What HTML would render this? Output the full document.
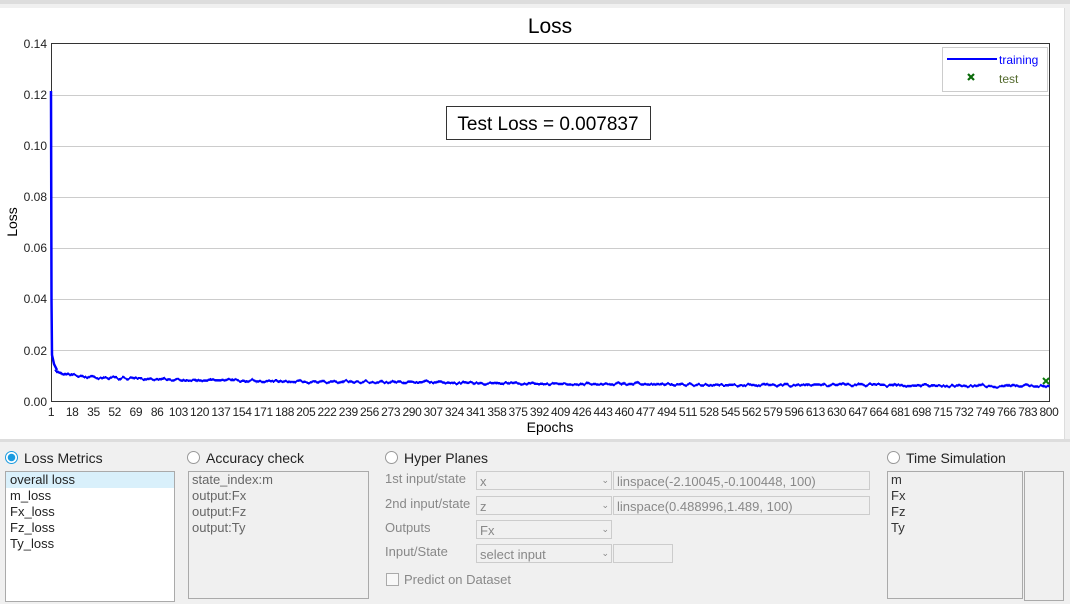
<!DOCTYPE html>
<html><head><meta charset="utf-8"><style>
body{margin:0;width:1070px;height:604px;background:#f0f0f0;font-family:"Liberation Sans",Arial,sans-serif;position:relative;overflow:hidden}
.abs{position:absolute}
.radio{position:absolute;width:11px;height:11px;border:1px solid #999;border-radius:50%;background:#fff}
.lbl{position:absolute;font-size:14px;color:#222}
.box{position:absolute;border:1px solid #aaa}
.g{color:#888;font-size:13px;position:absolute}
.dd{position:absolute;border:1px solid #ccc;background:#f0f0f0;font-size:13px;color:#888;box-sizing:border-box;padding:2px 3px}
</style></head><body>
<div class="abs" style="left:0;top:0;width:1070px;height:4px;background:#ddd"></div>
<div class="abs" style="left:0;top:8px;width:1064px;height:431px;background:#fff;border-right:1px solid #ddd"></div>
<div class="abs" style="left:0;top:439px;width:1070px;height:3px;background:#ddd"></div>
<svg class="abs" style="left:0;top:0" width="1070" height="440" font-family="Liberation Sans, Arial, sans-serif">
<defs>
<filter id="jit" x="-1%" y="-50%" width="102%" height="200%">
<feTurbulence type="fractalNoise" baseFrequency="0.25 0.02" numOctaves="2" seed="3" result="n"/>
<feDisplacementMap in="SourceGraphic" in2="n" scale="5" xChannelSelector="R" yChannelSelector="G"/>
</filter>
</defs>
<text x="550" y="33" font-size="21" text-anchor="middle" fill="#000">Loss</text>
<g stroke="#ccc" stroke-width="1">
<line x1="51" y1="95.5" x2="1049" y2="95.5"/><line x1="51" y1="146.5" x2="1049" y2="146.5"/><line x1="51" y1="197.5" x2="1049" y2="197.5"/><line x1="51" y1="248.5" x2="1049" y2="248.5"/><line x1="51" y1="299.5" x2="1049" y2="299.5"/><line x1="51" y1="350.5" x2="1049" y2="350.5"/>
</g>
<rect x="51.5" y="43.5" width="998" height="358" fill="none" stroke="#333"/>
<g font-size="12" fill="#222" text-anchor="end">
<text x="47" y="48">0.14</text><text x="47" y="99">0.12</text><text x="47" y="150">0.10</text><text x="47" y="201">0.08</text><text x="47" y="252">0.06</text><text x="47" y="303">0.04</text><text x="47" y="355">0.02</text><text x="47" y="406">0.00</text>
</g>
<text x="17" y="222" font-size="14" transform="rotate(-90 17 222)" text-anchor="middle">Loss</text>
<text x="550" y="432" font-size="14" text-anchor="middle">Epochs</text>
<g font-size="12" fill="#222" text-anchor="middle" letter-spacing="-0.3">
<text x="51" y="416">1</text><text x="72.2" y="416">18</text><text x="93.5" y="416">35</text><text x="114.7" y="416">52</text><text x="135.9" y="416">69</text><text x="157.2" y="416">86</text><text x="178.4" y="416">103</text><text x="199.6" y="416">120</text><text x="220.9" y="416">137</text><text x="242.1" y="416">154</text><text x="263.3" y="416">171</text><text x="284.6" y="416">188</text><text x="305.8" y="416">205</text><text x="327" y="416">222</text><text x="348.3" y="416">239</text><text x="369.5" y="416">256</text><text x="390.7" y="416">273</text><text x="412" y="416">290</text><text x="433.2" y="416">307</text><text x="454.4" y="416">324</text><text x="475.7" y="416">341</text><text x="496.9" y="416">358</text><text x="518.1" y="416">375</text><text x="539.4" y="416">392</text><text x="560.6" y="416">409</text><text x="581.8" y="416">426</text><text x="603.1" y="416">443</text><text x="624.3" y="416">460</text><text x="645.5" y="416">477</text><text x="666.8" y="416">494</text><text x="688" y="416">511</text><text x="709.2" y="416">528</text><text x="730.5" y="416">545</text><text x="751.7" y="416">562</text><text x="772.9" y="416">579</text><text x="794.2" y="416">596</text><text x="815.4" y="416">613</text><text x="836.6" y="416">630</text><text x="857.9" y="416">647</text><text x="879.1" y="416">664</text><text x="900.3" y="416">681</text><text x="921.6" y="416">698</text><text x="942.8" y="416">715</text><text x="964" y="416">732</text><text x="985.3" y="416">749</text><text x="1006.5" y="416">766</text><text x="1027.7" y="416">783</text><text x="1049" y="416">800</text>
</g>
<polyline fill="none" stroke="#0000ff" stroke-width="2.5" points="51,91 51.5,300 52,355 54,364 57,370"/>
<polyline fill="none" stroke="#0000ff" stroke-width="2.5" filter="url(#jit)" points="56,370 60,373 66,374 74,376 90,377 110,378 150,379 200,380 260,381 320,382 400,382 480,383 560,384 650,384 750,385 850,385 950,386 1049,386"/>
<path d="M1043,378 l6,6 M1049,378 l-6,6" stroke="#0a7a0a" stroke-width="2"/>
<rect x="942.5" y="47.5" width="105" height="44" fill="#fff" stroke="#ccc"/>
<line x1="947" y1="59" x2="997" y2="59" stroke="#0000ff" stroke-width="2"/>
<text x="999" y="64" font-size="12" fill="#0000ff">training</text>
<path d="M968,74 l6,6 M974,74 l-6,6" stroke="#0a6a0a" stroke-width="2.2"/>
<text x="999" y="83" font-size="12" fill="#556b2f">test</text>
<rect x="446.5" y="106.5" width="204" height="33" fill="#fff" stroke="#333"/>
<text x="548" y="130" font-size="19" text-anchor="middle" fill="#000">Test Loss = 0.007837</text>
</svg>

<div class="radio" style="left:5px;top:451px;border-color:#1a9be0;background:radial-gradient(circle,#1a9be0 0 3.5px,#fff 4px)"></div>
<div class="lbl" style="left:24px;top:450px">Loss Metrics</div>
<div class="box" style="left:5px;top:471px;width:168px;height:129px;background:#fff;font-size:13px;color:#222;line-height:16px">
<div style="background:#d9f0fb;padding-left:4px">overall loss</div>
<div style="padding-left:4px">m_loss</div><div style="padding-left:4px">Fx_loss</div><div style="padding-left:4px">Fz_loss</div><div style="padding-left:4px">Ty_loss</div></div>

<div class="radio" style="left:187px;top:451px"></div>
<div class="lbl" style="left:206px;top:450px">Accuracy check</div>
<div class="box" style="left:188px;top:471px;height:128px;background:#f0f0f0;font-size:13px;color:#666;line-height:16px;padding-left:3px;box-sizing:border-box;width:181px">
<div>state_index:m</div><div>output:Fx</div><div>output:Fz</div><div>output:Ty</div></div>

<div class="radio" style="left:385px;top:451px"></div>
<div class="lbl" style="left:404px;top:450px;font-size:14px">Hyper Planes</div>
<div class="g" style="left:385px;top:471px">1st input/state</div>
<div class="g" style="left:385px;top:496px">2nd input/state</div>
<div class="g" style="left:385px;top:520px">Outputs</div>
<div class="g" style="left:385px;top:544px">Input/State</div>
<div class="dd" style="left:476px;top:471px;width:136px;height:19px">x<span style="position:absolute;right:2px;font-size:9px;top:3px">⌄</span></div>
<div class="dd" style="left:613px;top:471px;width:257px;height:19px;background:#f0f0f0">linspace(-2.10045,-0.100448, 100)</div>
<div class="dd" style="left:476px;top:496px;width:136px;height:19px">z<span style="position:absolute;right:2px;font-size:9px;top:3px">⌄</span></div>
<div class="dd" style="left:613px;top:496px;width:257px;height:19px">linspace(0.488996,1.489, 100)</div>
<div class="dd" style="left:476px;top:520px;width:136px;height:19px">Fx<span style="position:absolute;right:2px;font-size:9px;top:3px">⌄</span></div>
<div class="dd" style="left:476px;top:544px;width:136px;height:19px">select input<span style="position:absolute;right:2px;font-size:9px;top:3px">⌄</span></div>
<div class="dd" style="left:613px;top:544px;width:60px;height:19px"></div>
<div class="abs" style="left:386px;top:573px;width:11px;height:11px;border:1px solid #aaa;background:#f8f8f8"></div>
<div class="g" style="left:404px;top:572px">Predict on Dataset</div>

<div class="radio" style="left:887px;top:451px"></div>
<div class="lbl" style="left:906px;top:450px">Time Simulation</div>
<div class="box" style="left:887px;top:471px;height:128px;background:#f0f0f0;font-size:13px;color:#333;line-height:16px;padding-left:3px;box-sizing:border-box;width:136px">
<div>m</div><div>Fx</div><div>Fz</div><div>Ty</div></div>
<div class="box" style="left:1024px;top:471px;width:38px;height:128px;background:#f0f0f0"></div>
</body></html>
